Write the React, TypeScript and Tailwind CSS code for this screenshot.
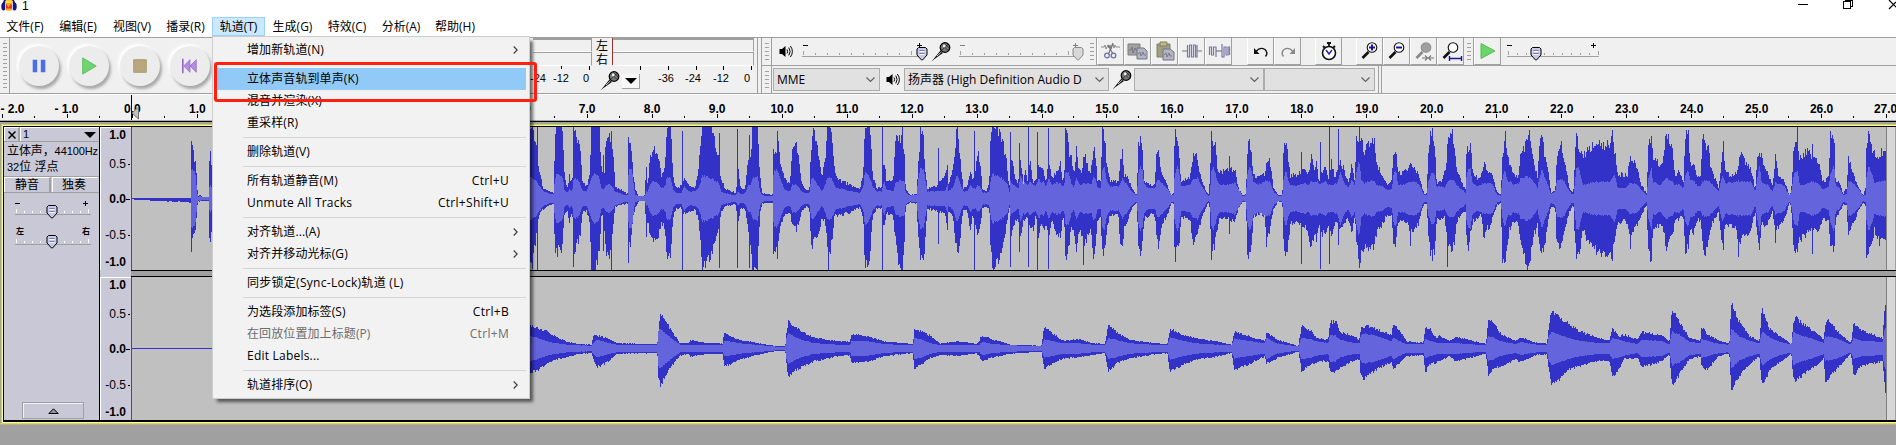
import React from "react";

type Pt = [number, number, number, number];

/* Envelope tables: position, peak above, peak below, rms - in thirds of a pixel. */
const parse = (s: string, off: number): Pt[] =>
  s
    .trim()
    .split(/\s*;\s*/)
    .filter(Boolean)
    .map((r) => {
      const [x, u, d, i] = r.split(/\s+/).map(Number);
      return [off + x / 3, u / 3, d / 3, (i ?? 0) / 3] as Pt;
    });

const TOP: Pt[] = [
  ...parse("396 1 1 1;440 1 4 1;480 1 7 1;540 1 8 1;572 1 10 1;574 170 158 80;578 140 110 90;587 110 95 70;591 50 30 20;594 4 6 3;600 8 8 5;609 3 5 3;626 3 6 3;628 100 110 30;632 130 120 40;640 40 40 20;700 80 80 40", 0),
  ...parse("0 205 170 62;8 216 200 58;20 160 100 50;26 100 50 40;40 28 30 20;60 18 18 12;72 18 16 12;74 130 130 50;78 216 160 70;96 212 150 70;100 170 100 50;104 60 40 20;114 30 40 18;118 68 80 30;124 50 40 20;129 60 60 30;130 195 160 55;136 190 145 60;150 150 120 45;158 50 40 22;170 36 35 20;180 70 75 45;184 216 214 60;196 216 214 75;208 214 160 60;214 90 50 30;222 50 55 25;228 170 180 40;240 180 160 40;250 130 75 30;256 35 22 18;290 14 14 8;294 14 14 8;295 175 160 60;298 160 140 90;304 150 125 90;309 80 60 60;315 30 30 10;325 6 8 5;345 8 6 5;349 115 110 20;353 30 60 20;360 120 110 40;368 140 130 50;382 150 120 45;395 65 70 30;405 90 90 35;411 210 180 60;422 216 180 60;430 60 50 25;440 28 28 15;455 40 28 15;462 60 45 35;475 40 40 20;495 28 30 20;505 80 60 30;512 180 120 50;516 216 200 68;530 214 195 65;545 214 160 60;560 140 105 50;567 110 80 45;573 60 40 20;585 28 22 15;618 15 15 8;621 60 60 15;625 95 75 20;632 30 30 12;645 25 26 14;655 110 90 40;662 110 140 40;668 214 200 60;683 214 214 65;690 70 40 20;697 14 14 8;725 10 12 6;728 10 12 6;730 165 150 70;738 120 150 90;743 190 165 80;750 110 80 60;765 60 50 25;780 40 40 20;787 165 80 40;800 155 90 40;815 50 40 20;825 26 25 15;838 26 25 15;844 150 150 60;850 212 130 60;862 170 120 40;875 60 60 22;885 110 60 35;892 214 145 60;903 210 150 65;914 80 50 35;925 55 50 30;960 40 40 20;990 25 25 15;1000 80 60 35;1005 210 210 80;1020 214 180 60;1028 70 50 35;1040 30 30 20;1055 30 28 20;1062 120 90 50;1070 50 40 25;1090 50 50 20;1097 180 130 45;1105 190 190 50;1115 175 214 55;1123 150 140 50;1127 25 20 15;1140 10 10 7;1160 12 14 10;1165 100 120 60;1172 205 180 90;1180 190 165 85;1184 100 165 70;1192 30 30 20;1222 35 35 20;1230 50 40 20;1245 60 40 20;1252 100 95 40;1256 40 30 20;1270 90 60 35;1281 214 160 70;1288 150 140 50;1300 30 30 20;1312 35 35 20;1322 85 105 40;1328 50 50 30;1337 80 80 30;1343 140 100 40;1349 110 90 35", 530),
  ...parse("0 100 90 30;4 70 60 30;7 25 25 16;20 22 25 16;28 40 30 20;31 170 130 50;37 216 206 70;45 207 200 70;55 198 185 65;70 160 130 55;80 110 80 45;86 45 40 30;88 20 15 12;91 120 100 50;95 130 100 45;105 60 70 35;115 45 60 30;122 125 120 70;130 45 65 45;137 80 60 45;142 50 50 40;150 110 90 50;160 45 90 40;168 50 50 35;176 110 130 60;185 80 65 45;190 90 95 50;198 45 70 35;206 110 120 60;215 60 60 40;230 75 110 45;241 110 115 45;248 50 60 35;253 60 60 40;256 212 185 70;262 200 185 80;268 140 130 70;275 120 90 40;282 65 100 30;289 145 150 60;298 80 100 40;305 80 105 40;312 125 150 45;318 120 130 40;325 80 100 45;333 80 90 40;340 150 175 65;347 130 130 55;353 50 60 30;362 50 50 30;367 205 165 85;374 190 165 90;380 100 90 50;390 50 50 35;400 50 45 35;415 50 50 35;422 120 150 45;427 135 140 60;433 70 90 50;445 60 60 35;455 30 30 20;468 12 12 8;471 12 12 8;474 150 140 60;480 178 165 100;488 130 140 80;492 50 60 40;510 40 45 30;525 40 50 30;530 150 120 50;537 125 140 55;545 80 80 45;565 30 40 25;575 8 12 8;581 15 15 8;584 200 170 70;592 180 145 95;598 120 130 80;603 50 55 35;630 60 60 40;640 125 145 60;646 135 110 60;655 100 90 60;665 50 60 35;685 8 10 6;690 60 30 10;694 190 185 80;700 160 150 95;706 175 130 80;712 80 90 50;720 75 55 40;747 90 60 40;765 85 70 45;775 30 30 30;788 8 10 6;798 12 10 8;802 145 150 70;808 165 175 100;814 150 135 80;820 75 60 50;830 62 45 40;855 70 50 50;860 110 140 50;870 115 90 50;880 30 30 20;895 8 8 6;907 8 8 6;911 145 150 60;918 170 165 80;926 110 130 50;931 65 70 40;950 70 75 35;962 80 80 40;975 90 80 45;985 75 110 40;995 125 150 50;1005 80 90 45;1010 110 130 50;1016 50 80 45;1026 75 110 45;1035 105 100 50;1045 50 80 40;1055 110 115 40;1065 60 70 40;1073 80 80 50;1082 110 100 80;1090 90 80 50;1105 45 60 30;1115 98 105 55;1124 50 50 40;1130 180 120 80;1137 180 180 115;1145 170 170 50;1152 140 140 45;1165 155 165 50;1185 165 135 50;1190 100 100 40;1205 75 80 35;1220 40 50 25;1236 50 50 25;1240 140 130 70;1248 135 130 90;1254 85 70 40;1262 70 60 40;1285 90 80 45;1295 105 100 50;1315 75 75 45;1325 35 35 25;1333 12 15 8;1340 15 15 8;1345 140 110 50;1350 190 150 60;1358 210 175 80;1365 160 150 70", 980),
  ...parse("0 70 80 35;5 45 60 35;15 50 60 35;25 75 55 30;31 90 90 40;34 150 150 50;45 200 150 55;55 160 130 50;62 80 70 40;72 60 50 30;80 40 45 25;89 25 35 15;92 150 130 70;98 145 150 90;104 150 100 85;110 80 70 45;125 60 55 35;135 70 45 40;145 100 130 45;152 90 80 45;160 80 90 45;170 65 60 40;182 20 20 12;195 10 10 6;198 110 150 50;207 180 180 90;215 140 130 50;220 110 90 50;235 70 70 40;249 65 75 45;254 150 140 60;265 140 170 60;273 175 205 65;283 185 180 60;292 120 110 50;305 60 80 30;310 150 150 60;318 180 150 90;326 130 140 60;334 110 80 45;345 15 25 10;358 25 30 20;362 110 130 50;375 175 145 60;385 120 100 50;400 30 40 20;412 15 15 8;418 130 140 60;421 190 170 90;430 150 160 90;440 120 90 40;450 140 110 42;460 145 140 45;480 165 150 48;500 160 165 48;520 155 155 48;529 180 180 60;535 150 120 75;545 70 70 30;560 70 65 30;575 70 75 35;582 125 120 45;592 115 90 45;605 80 80 40;615 40 50 25;632 15 20 10;637 150 160 60;646 180 180 90;652 120 90 45;660 130 80 45;670 90 80 40;680 110 80 45;690 180 140 60;700 175 120 55;710 160 110 50;717 60 60 40;730 80 60 40;742 40 50 30;748 180 155 70;756 195 150 85;765 90 85 50;772 110 110 55;785 60 60 35;795 70 70 35;799 195 140 50;808 150 160 55;816 175 130 50;825 90 80 45;848 30 40 20;857 110 120 60;861 160 130 70;868 80 80 45;885 65 75 45;900 75 90 50;908 100 130 50;915 140 120 50;930 100 105 50;945 85 90 50;958 25 35 20;964 130 110 60;970 145 160 100;977 120 75 50;985 90 85 40;995 75 70 40;1010 35 40 20;1018 120 100 45;1028 70 80 45;1045 50 60 35;1062 5 8 5;1068 50 50 30;1073 170 165 70;1084 150 140 85;1092 120 120 40;1110 140 110 40;1127 130 90 50;1150 100 90 40;1160 50 60 25;1178 60 60 35;1183 190 140 70;1195 175 160 100;1199 50 60 35;1210 50 40 30;1222 12 15 8;1232 30 20 12;1237 115 110 50;1250 80 80 45;1265 35 40 30;1282 8 10 6;1289 30 20 10;1291 150 170 60;1298 200 160 95;1306 150 150 80;1315 130 90 45;1330 130 130 50;1345 145 130 50;1352 155 128 50", 1436),
];
const SPIKES: Pt[] = [
  ...parse("575 171 158 60", 0),
  ...parse("22 214 214;130 205 205;188 216 216;220 130 155;244 200 214;295 184 192;458 202 213;568 196 207;622 207 207;658 190 207;667 216 214;895 140 214;1058 216 214;1117 216 214;1225 150 135;1281 216 160;1333 202 214", 530),
  ...parse("91 198 204;118 165 158;146 216 204;172 198 214;204 210 210;241 110 118;310 120 198;427 148 140;585 205 188;748 126 105;965 138 195;1020 168 210;1049 213 196;1075 207 137;1130 186 130;1137 216 206;1148 175 150;1292 70 140;1350 202 160;1358 210 186", 980),
  ...parse("34 162 203;50 207 155;199 120 192;207 202 182;275 175 206;279 204 190;421 189 180;529 204 186;582 126 150;646 186 186;690 192 156;756 204 150;861 170 152;908 95 174;1018 132 132;1084 216 158;1128 162 165;1183 202 140;1292 150 176;1298 202 165", 1436),
];
const BOTTOM: Pt[] = [
  ...parse("396 1 1 0;700 1 1 0", 0),
  ...parse("0 70 70 35;20 62 65 32;50 50 45 20;75 35 32 15;110 20 25 10;140 12 16 8;185 10 12 7;190 38 30 15;200 38 55 25;235 28 38 15;260 15 15 10;330 12 13 8;382 12 12 8;386 60 90 55;392 105 110 58;410 75 75 40;430 45 45 25;450 15 20 10;475 15 15 8;482 24 22 10;530 15 15 8;578 14 14 8;583 48 50 22;600 35 45 20;640 22 28 13;700 12 14 8;740 6 6 4;766 6 6 4;771 60 60 40;776 82 85 45;800 58 62 30;850 32 38 15;920 20 22 10;960 18 18 10;965 42 42 20;1015 35 38 20;1060 20 22 12;1145 12 12 8;1149 12 12 8;1153 55 60 30;1175 50 45 25;1200 38 28 15;1230 13 18 8;1285 20 20 10;1340 12 13 8;1349 22 22 10", 530),
  ...parse("0 30 32 15;10 36 36 18;40 25 25 12;90 10 14 8;185 7 8 5;192 64 58 26;210 48 48 22;250 22 28 14;300 26 25 14;335 15 18 10;375 12 12 8;385 68 68 30;410 48 42 24;450 24 28 14;520 15 16 10;562 12 12 9;570 58 70 32;600 42 52 24;650 28 30 14;700 22 25 11;755 10 12 8;763 48 65 28;800 38 48 22;855 20 22 14;860 48 45 30;890 25 28 14;955 6 8 4;965 68 66 32;995 50 45 25;1010 30 40 20;1045 25 35 15;1050 78 68 40;1068 80 70 36;1080 48 60 25;1120 35 35 15;1138 25 30 14;1143 60 85 40;1155 66 90 44;1190 56 60 36;1235 38 40 20;1240 74 58 32;1260 50 40 20;1280 20 22 12;1330 15 18 12;1336 60 70 28;1350 62 45 22;1367 32 42 18", 980),
  ...parse("0 30 42 16;10 38 36 16;40 22 22 14;60 32 36 15;120 20 22 10;150 12 14 8;154 60 50 30;157 90 78 36;180 65 55 28;195 42 50 20;240 22 32 12;255 32 38 18;300 16 18 10;333 14 16 9;338 60 60 35;347 112 112 48;370 95 90 40;400 70 60 30;430 50 50 22;490 30 35 15;520 22 35 15;530 58 85 30;550 35 55 25;565 40 30 20;605 25 28 12;618 48 55 25;680 38 35 20;700 18 15 10;708 120 112 50;730 75 75 40;760 32 32 20;793 22 22 14;797 65 55 28;815 40 60 22;850 22 20 12;880 14 14 10;886 138 124 58;910 80 80 35;940 35 45 22;970 22 22 14;978 115 114 50;1000 58 65 32;1030 38 40 20;1066 12 15 10;1072 80 90 50;1078 92 95 45;1105 70 75 35;1150 38 42 20;1163 25 28 16;1168 75 95 35;1180 82 85 35;1210 45 50 25;1245 14 15 10;1253 75 80 30;1275 52 50 22;1340 30 38 18;1345 110 100 50;1351 155 160 70", 1436),
];

const rnd = (n: number) => {
  const v = Math.sin(n * 127.1 + 11.7) * 43758.5453;
  return v - Math.floor(v);
};

function wavePaths(pts: Pt[], spikes: Pt[], mid: number, jitter: number) {
  let outer = "";
  let inner = "";
  let k = 0;
  for (let x = 132; x < 1886; x++) {
    const c = x + 0.5;
    while (k < pts.length - 2 && pts[k + 1][0] <= c) k++;
    const a = pts[k];
    const b = pts[k + 1];
    const t = Math.min(1, Math.max(0, (c - a[0]) / (b[0] - a[0] || 1)));
    const f = (i: number) => a[i] + (b[i] - a[i]) * t;
    const big = (v: number, s: number) => (v > 68 ? v : v * (1 + (rnd(s) - 0.5) * jitter));
    let u = big(f(1), x);
    let d = big(f(2), x + 5000);
    for (const s of spikes)
      if (Math.floor(s[0]) === x) {
        u = Math.max(u, s[1]);
        d = Math.max(d, s[2]);
      }
    const m = f(3) * (1 + (rnd(x + 9000) - 0.5) * jitter * 0.5);
    u = Math.min(Math.round(u), 72);
    d = Math.min(Math.round(d), 71);
    outer += `M${x} ${mid - u}h1V${mid + d + 1}h-1z`;
    const r = Math.min(Math.round(m), u, d);
    if (r > 0) inner += `M${x} ${mid - r}h1V${mid + r + 1}h-1z`;
  }
  return { outer, inner };
}

const W1 = wavePaths(TOP, SPIKES, 71, 0.22);
const W2 = wavePaths(BOTTOM, [], 71, 0.16);

function Wave({ data }: { data: { outer: string; inner: string } }) {
  return (
    <svg width="1765" height="143" viewBox="131 0 1765 143" shapeRendering="crispEdges" className="block shrink-0">
      <rect x="131" width="1765" height="143" fill="#c0c0c0" />
      <rect x="131" width="1" height="143" fill="#505050" />
      <path d={data.outer} fill="#3232c8" />
      <path d={data.inner} fill="#6464dc" />
      <rect x="1886" width="1" height="143" fill="#808080" />
      <rect x="1887" width="8" height="143" fill="#d6d6d6" />
      <rect x="1895" width="1" height="143" fill="#a0a0a0" />
    </svg>
  );
}

const UI = "font-['Open_Sans','Noto_Sans_CJK_SC',sans-serif]";
const ARIAL = "font-['Liberation_Sans','Noto_Sans_CJK_SC',sans-serif]";

function Grip({ tall }: { tall?: boolean }) {
  const n = tall ? 12 : 5;
  return (
    <div className="flex h-full w-[10px] shrink-0 flex-col items-center justify-center gap-[3px] border-r border-[#a0a0a0]">
      {Array.from({ length: n }, (_, i) => (
        <i key={i} className="h-px w-[4px] bg-[#a0a0a0]" />
      ))}
    </div>
  );
}

function Mic() {
  return (
    <svg width="20" height="20" viewBox="0 0 20 20" className="block shrink-0">
      <path d="M.5 19.500 9.500 8.500l2.500 2.500L3.500 17z" fill="#111" />
      <path d="M6 14 10.500 9.800" stroke="#ccc" strokeWidth="1" />
      <circle cx="14" cy="5.500" r="4.800" fill="#777" stroke="#000" strokeWidth="1.200" />
      <path d="M11.500 3l5.500 5.500M13.500 1.500l4.500 4.500M17 2.500l-6 5.500" stroke="#222" strokeWidth=".7" />
      <circle cx="13.200" cy="4" r="1.400" fill="#eee" />
    </svg>
  );
}

function Speaker() {
  return (
    <svg width="14" height="13" viewBox="0 0 14 13" className="block shrink-0">
      <path d="M.5 4h2.500L6.500 1v11L3 9H.5z" fill="#000" />
      <path d="M8 4.500q1.300 2 0 4M9.800 2.600q2.600 3.900 0 7.800M11.400 1q4 5.500 0 11" fill="none" stroke="#000" />
    </svg>
  );
}

function Thumb({ x, y, off }: { x: number; y: number; off?: boolean }) {
  return (
    <g transform={`translate(${x} ${y})`}>
      <path
        d="M-3.500-5.500h7l1.500 1.500v6L.5 7h-1L-5 2v-6z"
        fill={off ? "#d8d8d8" : "#c8c8e6"}
        stroke={off ? "#888" : "#000"}
      />
      {!off && <path d="M-2.500-2.500h5M-2.500 .5h5" stroke="#7078b0" />}
      {!off && <path d="M-2.500-1.500h5M-2.500 1.500h5" stroke="#fff" />}
    </g>
  );
}

function Slider({
  w, start, end, step, line, thumb, thumbY, minus, plus, off, white,
}: {
  w: number; start: number; end: number; step: number; line: number; thumb: number; thumbY: number;
  minus?: number; plus?: number; off?: boolean; white?: boolean;
}) {
  const ticks: number[] = [];
  for (let v = start + 1; v < end; v += step) ticks.push(Math.round(v));
  const c = off ? "#808080" : "#000";
  return (
    <svg width={w} height="27" viewBox={`0 0 ${w} 27`} shapeRendering="crispEdges" className="block shrink-0">
      <rect x={start} y={line} width={end - start} height="1" fill="#a0a0a0" />
      {ticks.map((t, i) => {
        const h = i === 0 || i === ticks.length - 1 ? 5 : 3;
        return <rect key={t} x={t} y={line - h} width="1" height={h - 1} fill={white ? "#fff" : "#a0a0a0"} />;
      })}
      {minus !== undefined && <rect x={minus} y={line - 11} width="5" height="1" fill={c} />}
      {plus !== undefined && <path d={`M${plus} ${line - 11}h5v1h-5zM${plus + 2} ${line - 13}h1v5h-1z`} fill={c} />}
      <g shapeRendering="auto">
        <Thumb x={thumb} y={thumbY} off={off} />
      </g>
    </svg>
  );
}

function Tool({ children }: { children: React.ReactNode }) {
  return (
    <div className="flex h-[27px] w-[27px] shrink-0 items-center justify-center border-r border-b border-l border-r-[#a0a0a0] border-b-[#a0a0a0] border-l-white">
      <svg width="24" height="24" viewBox="0 0 24 24" fill="none">
        {children}
      </svg>
    </div>
  );
}

function Lens({ off, sign }: { off?: boolean; sign?: "+" | "-" }) {
  return (
    <>
      <path d="m4.500 19 6-6" stroke={off ? "#888" : "#111"} strokeWidth="2.600" />
      <circle cx="14" cy="8.500" r="4.800" fill={off ? "#a0a0a0" : "#fff"} stroke={off ? "#909090" : "#111"} strokeWidth="1.100" />
      {sign && <path d={sign === "+" ? "M11 8.500h6M14 5.500v6" : "M11 8.500h6"} stroke="#1414a0" strokeWidth="2" />}
    </>
  );
}

function Select({ text, cls }: { text?: string; cls: string }) {
  return (
    <div className={`flex h-[23px] shrink-0 items-center justify-between border border-[#adadad] bg-[#e1e1e1] pr-[4px] pl-[3px] ${cls}`}>
      <span className={`text-[12px] whitespace-pre ${UI}`}>{text}</span>
      <svg width="9" height="6" viewBox="0 0 9 6" fill="none" className="shrink-0">
        <path d="M.5.5l4 4 4-4" stroke="#606060" strokeWidth="1.200" />
      </svg>
    </div>
  );
}

function RoundButton({ children }: { children: React.ReactNode }) {
  return (
    <div className="flex h-[40px] w-[40px] shrink-0 items-center justify-center rounded-full bg-[#ececec] shadow-[2px_3px_3px_#a8a8a8,-2px_-2px_3px_#ffffff]">
      <svg width="18" height="18" viewBox="0 0 20 20">
        {children}
      </svg>
    </div>
  );
}

function MeterBars({ cls }: { cls: string }) {
  return (
    <div className={`flex h-[28px] flex-col ${cls}`}>
      <div className="h-[14px] border-t-2 border-r border-[#a0a0a0] border-b border-b-white" />
      <div className="h-[14px] border-t border-r border-[#a0a0a0] border-b border-b-white" />
    </div>
  );
}

const MENUS = ["文件(F)", "编辑(E)", "视图(V)", "播录(R)", "轨道(T)", "生成(G)", "特效(C)", "分析(A)", "帮助(H)"];
const MENU_W = [
  "w-[52px]", "w-[54px]", "w-[54px]", "w-[53px]", "w-[53px]", "w-[55px]", "w-[54px]", "w-[54px]", "w-[54px]",
];

type Item = { t: string; k?: string; sub?: boolean; off?: boolean; hot?: boolean; sp?: string } | null;
const ITEMS: Item[] = [
  { t: "增加新轨道(N)", sub: true },
  null,
  { t: "立体声音轨到单声(K)", hot: true },
  { t: "混音并渲染(X)" },
  { t: "重采样(R)" },
  null,
  { t: "删除轨道(V)" },
  null,
  { t: "所有轨道静音(M)", k: "Ctrl+U" },
  { t: "Unmute All Tracks", k: "Ctrl+Shift+U", sp: "tracking-[0.22px]" },
  null,
  { t: "对齐轨道...(A)", sub: true },
  { t: "对齐并移动光标(G)", sub: true },
  null,
  { t: "同步锁定(Sync-Lock)轨道 (L)", sp: "tracking-[0.28px]" },
  null,
  { t: "为选段添加标签(S)", k: "Ctrl+B" },
  { t: "在回放位置加上标题(P)", k: "Ctrl+M", off: true },
  { t: "Edit Labels...", sp: "tracking-[0.22px]" },
  null,
  { t: "轨道排序(O)", sub: true },
];

function TrackMenu() {
  return (
    <div className={`absolute top-[36px] left-[212px] w-[318px] border border-[#cccccc] bg-[#f2f2f2] px-[3px] py-[2px] shadow-[4px_4px_3px_-1px_rgba(0,0,0,0.55)] ${UI}`}>
      {ITEMS.map((it, i) =>
        it === null ? (
          <div key={i} className="flex h-[7px] items-center pl-[27px]">
            <i className="h-px w-full bg-[#d4d4d4]" />
          </div>
        ) : (
          <div
            key={i}
            className={`flex h-[22px] items-center pl-[31px] text-[12px] leading-[22px] whitespace-pre ${it.hot ? "bg-[#91c9f7]" : ""} ${it.off ? "text-[#6d6d6d]" : "text-black"}`}
          >
            <span className={`grow ${it.sp ?? "tracking-[0.1px]"}`}>{it.t}</span>
            {it.k && <span className="pr-[17px] tracking-[0.3px]">{it.k}</span>}
            {it.sub && (
              <svg width="5" height="8" viewBox="0 0 5 8" fill="none" className="mr-[8px]">
                <path d="M.7.5 4.200 4 .7 7.500" stroke="#404040" strokeWidth="1.200" />
              </svg>
            )}
          </div>
        ),
      )}
    </div>
  );
}

function VRuler() {
  return (
    <div className={`h-full w-[31px] shrink-0 border-t border-l border-white bg-[#c8c8d7] text-right text-[12px] leading-[14px] ${ARIAL}`}>
      {[
        ["1.0", "font-bold pr-[5px]", ""],
        ["0.5", "mt-[15px] pr-[5px]", "w-[2px]"],
        ["0.0", "mt-[21px] font-bold pr-[5px]", "w-[4px]"],
        ["-0.5", "mt-[22px] pr-[5px]", "w-[2px]"],
        ["-1.0", "mt-[13px] font-bold pr-[5px]", ""],
      ].map(([t, c, tick]) => (
        <div key={t} className={`relative h-[14px] ${c}`}>
          {t}
          {tick && <i className={`absolute top-[7px] right-[1px] h-px bg-black ${tick}`} />}
        </div>
      ))}
    </div>
  );
}

export default function App() {
  return (
    <div className={`relative flex h-[445px] w-[1896px] flex-col overflow-hidden bg-[#f0f0f0] text-black ${UI}`}>
      {/* title bar */}
      <div className="flex h-[17px] shrink-0 items-start bg-white">
        <svg width="16" height="12" viewBox="0 0 16 12" className="ml-[1px] block">
          <path d="M2.500 6Q3-2 8-2t5.500 8" fill="none" stroke="#14148c" strokeWidth="2" />
          <path d="M4 1q4-3 8 0v9q-4 1.500-8 0z" fill="#f5a81c" />
          <path d="M4 6l1.500-2L7.500 7.500 9.500 4 12 6v2.500H4z" fill="#e03c14" />
          <path d="M5 .5h6v2.500H5z" fill="#fbe04a" />
          <ellipse cx="2.500" cy="6.500" rx="2.200" ry="4" fill="#14148c" />
          <ellipse cx="13.500" cy="6.500" rx="2.200" ry="4" fill="#14148c" />
          <path d="M4.500 3v7M11.500 3v7" stroke="#c8c8ec" />
        </svg>
        <span className={`ml-[5px] text-[12px] leading-[13px] ${ARIAL}`}>1</span>
        <svg width="98" height="10" viewBox="0 0 98 10" fill="none" stroke="#000" shapeRendering="crispEdges" className="mt-0 ml-auto block">
          <path d="M0 4.500h10M45.500 1.500h7v7h-7zM47.500 1V-1M48 .5h6.500v6H53" />
          <path d="m91 0 9 9M91 9l7-7" shapeRendering="auto" strokeWidth="1.200" />
        </svg>
      </div>

      {/* menu bar */}
      <div className="flex h-[20px] shrink-0 items-start bg-white text-[12px]">
        {MENUS.map((m, i) => (
          <div
            key={m}
            className={`flex h-[19px] shrink-0 items-center justify-center border pt-px whitespace-pre ${MENU_W[i]} ${i === 4 ? "border-[#99d1ff] bg-[#cce8ff]" : "border-transparent"} ${i === 0 ? "-ml-[1px]" : ""}`}
          >
            {m}
          </div>
        ))}
      </div>

      {/* toolbars */}
      <div className="flex h-[57px] shrink-0 border-y border-[#a0a0a0]">
        <div className="flex h-full w-[533px] shrink-0 items-center">
          <Grip tall />
          <div className="flex gap-[10.3px] pl-[9px]">
            <RoundButton>
              <path d="M3 3h5v14H3zM12 3h5v14h-5z" fill="#4b6eea" />
            </RoundButton>
            <RoundButton>
              <path d="M3 1 18 10 3 19z" fill="#6fd66f" stroke="#58ba58" />
            </RoundButton>
            <RoundButton>
              <path d="M3 3h14v14H3z" fill="#baa67d" stroke="#a8966e" />
            </RoundButton>
            <RoundButton>
              <path d="M2 2v16" stroke="#9467c4" strokeWidth="1.800" />
              <path d="M3 10l7-7v14zM10 10l7-7v14z" fill="#b48ce0" stroke="#9467c4" strokeWidth=".8" />
            </RoundButton>
          </div>
        </div>

        {/* playback meter */}
        <div className="flex w-[59px] shrink-0 flex-col">
          <MeterBars cls="w-[59px]" />
          <div className="flex h-[4px] pl-[28px]">
            <i className="h-[3px] w-px bg-black" />
            <i className="ml-[27px] h-[4px] w-px bg-black" />
          </div>
          <div className={`flex text-[11px] leading-[16px] ${ARIAL}`}>
            <span className="-ml-[3px] w-[23px]">-24</span>
            <span className="w-[30px]">-12</span>
            <span>0</span>
          </div>
        </div>
        {/* recording meter */}
        <div className="flex w-[165px] shrink-0 flex-col pl-[4px]">
          <div className="flex h-[28px]">
            <div className="flex w-[16px] flex-col font-['Noto_Sans_CJK_SC',sans-serif] text-[12px] leading-[14px]">
              <span className="h-[14px]">左</span>
              <span className="h-[14px]">右</span>
            </div>
            <i className="h-[27px] w-px bg-[#a03030]" />
            <MeterBars cls="w-[141px]" />
          </div>
          <div className="flex">
            <div className="ml-[4px] pt-[5px]">
              <Mic />
            </div>
            <div className="mt-[8px] ml-[2px] flex h-[15px] w-[18px] items-center justify-center border-r border-b border-[#a0a0a0] bg-[#f8f8f8]">
              <svg width="12" height="6" viewBox="0 0 12 6">
                <path d="M0 0h12L6 6z" />
              </svg>
            </div>
            <div className={`flex flex-col text-[11px] leading-[16px] ${ARIAL}`}>
              <div className="flex h-[4px] w-[112px] justify-between">
                {[0, 1, 2, 3, 4].map((i) => (
                  <i key={i} className="h-[4px] w-px bg-black" />
                ))}
              </div>
              <div className="flex pl-[18px]">
                <span className="w-[27px]">-36</span>
                <span className="w-[28px]">-24</span>
                <span className="w-[31px]">-12</span>
                <span>0</span>
              </div>
            </div>
          </div>
        </div>
        <div className="w-[5px] shrink-0 border-x border-[#a0a0a0]" />

        {/* right stack */}
        <div className="flex grow flex-col">
          <div className="flex h-[28px] shrink-0 items-center border-b border-[#a0a0a0]">
            <Grip />
            <div className="ml-[7px]">
              <Speaker />
            </div>
            <div className="ml-[4px]">
              <Slider w={132} start={5} end={126} step={12} line={18} minus={6} plus={120} thumb={125} thumbY={15} />
            </div>
            <div className="ml-[2px]">
              <Mic />
            </div>
            <div>
              <Slider w={136} start={8} end={127} step={12} line={18} minus={9} plus={122} thumb={127} thumbY={15} off />
            </div>
            <Grip />
            <div className="flex">
              <Tool>
                <path d="M2 8h3l1-2 1 4 2-4 1 3 1-3 1 4 2-5 1 4 1-3 1 2h4" stroke="#808080" strokeWidth=".9" />
                <path d="M14 4 9.500 15M9 6l5 9" stroke="#707078" strokeWidth="1.200" />
                <circle cx="8" cy="16.500" r="2.300" stroke="#7070a8" strokeWidth="1.300" />
                <circle cx="14.500" cy="16.500" r="2.300" stroke="#7070a8" strokeWidth="1.300" />
              </Tool>
              <Tool>
                <path d="M2 5h12v11H2z" fill="#a2a2a2" stroke="#7c7c7c" />
                <path d="M11 9h7l3 3v8H11z" fill="#b4b4be" stroke="#74748c" />
                <path d="M3 11h2l1-3 1 6 2-5 1 2h1M12 15l2-2 1 4 2-4 1 3h2" stroke="#70708c" strokeWidth=".9" />
              </Tool>
              <Tool>
                <path d="M4 5h13v13H4z" fill="#a09e80" stroke="#807e68" />
                <path d="M7 3h7v4H7z" fill="#c0ba80" stroke="#807e68" />
                <path d="M10 10h7l4 3v8H10z" fill="#b4b4be" stroke="#74748c" />
                <path d="M11 16l2-2 1 4 2-4 1 3h2" stroke="#70708c" strokeWidth=".9" />
              </Tool>
              <Tool>
                <path d="M2 12h5M17 12h5" stroke="#777" strokeWidth="1.200" />
                <path d="M7.500 13V6v12h2V6h2v12h2V6h2v12h1.500V6v6" stroke="#7878a8" strokeWidth="1.200" />
              </Tool>
              <Tool>
                <path d="M9 12h6" stroke="#777" strokeWidth="1.200" />
                <path d="M2.500 16V8h2v8h2V8H9V18M15 5v13h2V8h2v8h2V8h1.500v8" stroke="#7878a8" strokeWidth="1.200" />
              </Tool>
              <div className="w-[15px]" />
              <Tool>
                <path d="M7 12.500q4-5 9-2 3.500 3.500.5 7" stroke="#111" strokeWidth="1.400" />
                <path d="M5 9v6h5.500z" fill="#111" />
              </Tool>
              <Tool>
                <path d="M17 12.500q-4-5-9-2-3.500 3.500-.5 7" stroke="#888" strokeWidth="1.400" />
                <path d="M19 9v6h-5.500z" fill="#888" />
              </Tool>
              <div className="w-[14px]" />
              <Tool>
                <circle cx="12" cy="14" r="6.500" fill="#fff" stroke="#111" strokeWidth="1.600" />
                <path d="M10 4h4M12 4v3M6 7l2 2M18 7l-2 2" stroke="#111" strokeWidth="1.800" />
                <path d="m9 11 3 4 3-4" stroke="#2020b0" strokeWidth="1.400" />
              </Tool>
              <div className="w-[14px]" />
              <Tool>
                <Lens sign="+" />
              </Tool>
              <Tool>
                <Lens sign="-" />
              </Tool>
              <Tool>
                <Lens off />
                <path d="M10 19h12M13 16.500 15.500 19 13 21.500M19 16.500 16.500 19l2.500 2.500" stroke="#777" strokeWidth="1.100" />
              </Tool>
              <Tool>
                <Lens />
                <path d="M10.500 19.500h12M10.500 17v5M22.500 17v5" stroke="#1414a0" strokeWidth="1.400" />
              </Tool>
            </div>
            <Grip />
            <Tool>
              <path d="M5 4.500 19 12 5 19.500z" fill="#6cd46c" stroke="#5ab85a" />
            </Tool>
            <Slider w={100} start={6} end={98} step={9} line={18} minus={6} plus={90} thumb={35} thumbY={15} />
          </div>
          <div className="flex h-[27px] shrink-0 items-center">
            <Grip />
            <Select text="MME" cls="ml-[1px] w-[107px]" />
            <div className="ml-[6px]">
              <Speaker />
            </div>
            <Select text="扬声器 (High Definition Audio D" cls="ml-[4px] w-[205px]" />
            <div className="ml-[3px]">
              <Mic />
            </div>
            <Select cls="ml-[2px] w-[130px]" />
            <Select cls="w-[111px]" />
            <div className="ml-[3px] h-full w-[4px] border-x border-[#a0a0a0]" />
          </div>
        </div>
      </div>

      {/* timeline */}
      <div className="flex h-[26px] shrink-0 border-t border-white">
        <div className={`-ml-[30px] flex text-[12px] font-bold ${ARIAL}`}>
          {Array.from({ length: 30 }, (_, i) => i - 2).map((n) => (
            <div key={n} className="flex w-[64.97px] shrink-0 flex-col items-center">
              <span className={`h-[19px] pt-[6px] leading-[16px] whitespace-pre ${n === -2 ? "translate-x-[10px]" : n < 0 ? "-translate-x-[1px]" : ""} ${n === 27 ? "-translate-x-[1px]" : ""}`}>
                {n < 0 ? `- ${-n}.0` : `${n}.0`}
              </span>
              <div className="flex w-full items-end pl-[32px]">
                <i className="h-[4px] w-px bg-black" />
                <i className="ml-[31px] h-[2px] w-px bg-black" />
              </div>
            </div>
          ))}
        </div>
      </div>

      {/* track */}
      <div className="flex grow flex-col bg-[#a0a0a0]">
        <div className="h-px bg-[#a8aeae]" />
        <div className="h-px bg-black" />
        <div className="h-[2px] bg-[#a6a68c]" />
        <div className="ml-[1px] h-px bg-[#c8c888]" />
        <div className="ml-[2px] h-px bg-[#ffff80]" />
        <div className="flex h-[296px] shrink-0">
          <div className="w-px shrink-0 bg-[#a8a88c]" />
          <div className="w-px shrink-0 bg-[#c8c888]" />
          <div className="w-px shrink-0 bg-[#ffff80]" />
          <div className="flex h-full w-[1893px] shrink-0 border-t border-b-2 border-l border-black">
            {/* control panel */}
            <div className={`flex h-full w-[96px] shrink-0 flex-col border-r border-black bg-[#c8c8d7] ${ARIAL}`}>
              <div className="flex h-[15px] items-center border-b border-[#a0a0a0] text-[12px]">
                <div className="flex h-full w-[16px] items-center justify-center border-t border-r-2 border-l border-t-white border-r-[#a0a0a0] border-l-white">
                  <svg width="8" height="8" viewBox="0 0 8 8">
                    <path d="m.5.5 7 7m0-7-7 7" stroke="#000" strokeWidth="1.500" />
                  </svg>
                </div>
                <div className="flex h-full grow items-center justify-between border-t border-l border-white pr-[3px] pl-[2px] text-[11px]">
                  <span>1</span>
                  <svg width="12" height="6" viewBox="0 0 12 6">
                    <path d="M0 0h12L6 6z" />
                  </svg>
                </div>
              </div>
              <div className="flex h-[34px] flex-col pt-[1px] pl-[3px] text-[12px] leading-[16px] whitespace-pre">
                <span className="tracking-[-0.1px]">
                  立体声，<span className="text-[11px] tracking-0">44100Hz</span>
                </span>
                <span>
                  <span className="text-[11px]">32</span>位 浮点
                </span>
              </div>
              <div className="flex h-[17px] shrink-0 gap-[1px] border-y border-[#a0a0a0] text-[12px] leading-[15px]">
                <div className="w-[47px] border-t border-r-2 border-l border-white border-r-[#a0a0a0] text-center">静音</div>
                <div className="w-[46px] border-t border-l border-white pr-[3px] text-center">独奏</div>
              </div>
              <div className="mt-[3px] h-[27px]">
                <Slider w={95} start={11} end={87} step={8} line={18} minus={11} plus={79} thumb={48} thumbY={15} white />
              </div>
              <div className="mt-[5px] flex h-[7px] justify-between pr-[9px] pl-[12px] text-[8px] leading-[7px] font-bold">
                <span>左</span>
                <span>右</span>
              </div>
              <div className="-mt-[10px] h-[27px]">
                <Slider w={95} start={11} end={87} step={8} line={19} thumb={48} thumbY={16} white />
              </div>
              <div className="mt-auto mb-[1px] ml-[18px] flex h-[17px] w-[62px] items-center justify-center border border-[#a0a0a0] shadow-[inset_1px_1px_0_#f0f0f8]">
                <svg width="11" height="6" viewBox="0 0 11 6">
                  <path d="M.8 5.500 5.500.8l4.700 4.700z" fill="#9090a0" stroke="#000" />
                </svg>
              </div>
            </div>
            {/* channels */}
            <div className="flex flex-col">
              <div className="flex h-[143px] shrink-0">
                <VRuler />
                <Wave data={W1} />
              </div>
              <div className="flex h-[7px] shrink-0">
                <div className="w-[31px] shrink-0 bg-[#c8c8d7]" />
                <div className="grow border-y border-black bg-[#a0a0a0]" />
              </div>
              <div className="flex h-[143px] shrink-0">
                <VRuler />
                <Wave data={W2} />
              </div>
            </div>
          </div>
        </div>
        <div className="ml-[2px] h-px shrink-0 bg-[#ffff80]" />
        <div className="h-px shrink-0 bg-[#d2d284]" />
        <div className="h-px shrink-0 bg-[#b0b08c]" />
      </div>

      {/* playhead marker */}
      <svg width="9" height="25" viewBox="0 0 9 25" className="absolute top-[95px] left-[131px]">
        <path d="M.5 0v25" stroke="#000" />
        <path d="M7.500 12v12L1 18z" fill="#c0c0c0" stroke="#707070" />
      </svg>

      <TrackMenu />

      {/* highlight frame */}
      <div className="absolute top-[62px] left-[214px] h-[40px] w-[323px] rounded-[3px] border-[3px] border-[#ff2010]" />
    </div>
  );
}
